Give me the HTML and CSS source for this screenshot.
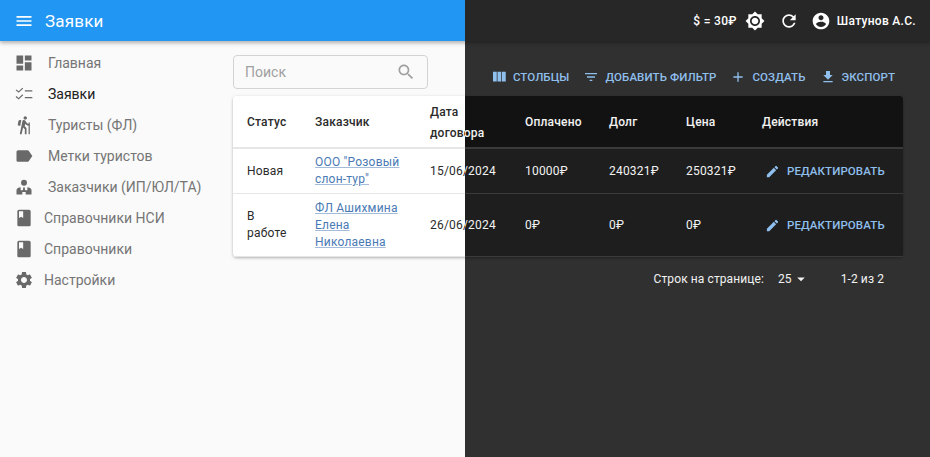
FILE: index.html
```html
<!DOCTYPE html>
<html lang="ru">
<head>
    <meta charset="UTF-8">
    <title>Заявки</title>
    <link rel="stylesheet" href="styles.css">
</head>
<body>
    <svg class="sprite" xmlns="http://www.w3.org/2000/svg">
        <symbol id="i-menu" viewBox="0 0 24 24"><path d="M3 18h18v-2H3v2zm0-5h18v-2H3v2zm0-7v2h18V6H3z"/></symbol>
        <symbol id="i-dashboard" viewBox="0 0 24 24"><path d="M3 13h8V3H3v10zm0 8h8v-6H3v6zm10 0h8V11h-8v10zm0-18v6h8V3h-8z"/></symbol>
        <symbol id="i-checklist" viewBox="0 0 24 24"><path d="M22 7.5h-9V9h9V7.5zm0 8h-9V17h9v-1.500zM5.540 10.500 2 7.460l1-1 2.540 2.200 4.500-4.300 1 1-5.500 5.140zm0 8L2 15.460l1-1 2.540 2.200 4.500-4.300 1 1-5.500 5.140z"/></symbol>
        <symbol id="i-hiking" viewBox="0 0 24 24"><path d="M13.5 5.5c1.1 0 2-.9 2-2s-.9-2-2-2-2 .9-2 2 .9 2 2 2zM17.5 10.78c-1.23-.37-2.22-1.17-2.8-2.18l-1-1.6c-.41-.65-1.11-1-1.84-1-.78 0-1.59.5-1.78 1.44S7 23 7 23h2.1l1.8-8 2.1 2v6h2v-7.5l-2.1-2 .6-3c1 1.15 2.41 2.01 4 2.34V23H19V9h-1.5v1.78zM7.43 13.13l-2.12-.41c-.54-.11-.9-.63-.79-1.17l.76-3.93c.21-1.08 1.26-1.79 2.34-1.58l1.16.23-1.35 6.86z"/></symbol>
        <symbol id="i-label" viewBox="0 0 24 24"><path d="M17.63 5.84C17.27 5.33 16.67 5 16 5L5 5.01C3.9 5.01 3 5.9 3 7v10c0 1.1.9 1.99 2 1.99L16 19c.67 0 1.27-.33 1.63-.84L22 12l-4.37-6.16z"/></symbol>
        <symbol id="i-customer" viewBox="0 0 24 24"><circle cx="12" cy="7" r="3.6"/><path d="M3 21v-5c0-2 1.6-3.2 3.500-3.500L8 12.300V16h2.600l.7-3.800h1.400l.7 3.800H16v-3.700l1.500.2c1.900.3 3.500 1.500 3.500 3.500v5h-7v-3h-4v3H3z"/></symbol>
        <symbol id="i-book" viewBox="0 0 24 24"><path d="M18 2H6c-1.1 0-2 .9-2 2v16c0 1.1.9 2 2 2h12c1.1 0 2-.9 2-2V4c0-1.1-.9-2-2-2zM6 4h5v8l-2.5-1.5L6 12V4z"/></symbol>
        <symbol id="i-settings" viewBox="0 0 24 24"><path d="M19.14 12.94c.04-.3.06-.61.06-.94 0-.32-.02-.64-.07-.94l2.03-1.58c.18-.14.23-.41.12-.61l-1.92-3.32c-.12-.22-.37-.29-.59-.22l-2.39.96c-.5-.38-1.03-.7-1.62-.94l-.36-2.54c-.04-.24-.24-.41-.48-.41h-3.84c-.24 0-.43.17-.47.41l-.36 2.54c-.59.24-1.13.57-1.62.94l-2.39-.96c-.22-.08-.47 0-.59.22L2.74 8.87c-.12.21-.08.47.12.61l2.03 1.58c-.05.3-.09.63-.09.94s.02.64.07.94l-2.03 1.58c-.18.14-.23.41-.12.61l1.92 3.32c.12.22.37.29.59.22l2.39-.96c.5.38 1.03.7 1.62.94l.36 2.54c.05.24.24.41.48.41h3.84c.24 0 .44-.17.47-.41l.36-2.54c.59-.24 1.13-.56 1.62-.94l2.39.96c.22.08.47 0 .59-.22l1.92-3.32c.12-.22.07-.47-.12-.61l-2.01-1.58zM12 15.6c-1.98 0-3.6-1.62-3.6-3.6s1.62-3.6 3.6-3.6 3.6 1.62 3.6 3.6-1.62 3.6-3.6 3.6z"/></symbol>
        <symbol id="i-search" viewBox="0 0 24 24"><path d="M15.5 14h-.79l-.28-.27C15.41 12.59 16 11.11 16 9.5 16 5.91 13.09 3 9.5 3S3 5.91 3 9.5 5.91 16 9.5 16c1.61 0 3.09-.59 4.23-1.57l.27.28v.79l5 4.99L20.49 19l-4.99-5zm-6 0C7.01 14 5 11.99 5 9.5S7.01 5 9.5 5 14 7.01 14 9.5 11.99 14 9.5 14z"/></symbol>
        <symbol id="i-brightness" viewBox="0 0 24 24"><path d="M20 8.69V4h-4.69L12 .69 8.69 4H4v4.69L.69 12 4 15.31V20h4.69L12 23.31 15.31 20H20v-4.69L23.31 12 20 8.69zM12 18c-3.31 0-6-2.69-6-6s2.69-6 6-6 6 2.69 6 6-2.69 6-6 6zm0-10c-2.21 0-4 1.79-4 4s1.79 4 4 4 4-1.79 4-4-1.79-4-4-4z"/></symbol>
        <symbol id="i-refresh" viewBox="0 0 24 24"><path d="M17.65 6.35C16.2 4.9 14.21 4 12 4c-4.42 0-7.99 3.58-7.99 8s3.57 8 7.99 8c3.73 0 6.84-2.55 7.73-6h-2.08c-.82 2.33-3.04 4-5.65 4-3.31 0-6-2.69-6-6s2.69-6 6-6c1.66 0 3.14.69 4.22 1.78L13 11h7V4l-2.35 2.35z"/></symbol>
        <symbol id="i-account" viewBox="0 0 24 24"><path d="M12 2C6.48 2 2 6.48 2 12s4.48 10 10 10 10-4.48 10-10S17.52 2 12 2zm0 3c1.66 0 3 1.34 3 3s-1.34 3-3 3-3-1.34-3-3 1.34-3 3-3zm0 14.2c-2.5 0-4.71-1.28-6-3.22.03-1.99 4-3.08 6-3.08 1.99 0 5.97 1.09 6 3.08-1.29 1.94-3.5 3.22-6 3.22z"/></symbol>
        <symbol id="i-columns" viewBox="0 0 24 24"><path d="M10 18h5V5h-5v13zm-6 0h5V5H4v13zM16 5v13h5V5h-5z"/></symbol>
        <symbol id="i-filter" viewBox="0 0 24 24"><path d="M10 18h4v-2h-4v2zM3 6v2h18V6H3zm3 7h12v-2H6v2z"/></symbol>
        <symbol id="i-add" viewBox="0 0 24 24"><path d="M19 13h-6v6h-2v-6H5v-2h6V5h2v6h6v2z"/></symbol>
        <symbol id="i-export" viewBox="0 0 24 24"><path d="M19 9h-4V3H9v6H5l7 7 7-7zM5 18v2h14v-2H5z"/></symbol>
        <symbol id="i-edit" viewBox="0 0 24 24"><path d="M3 17.25V21h3.75L17.81 9.94l-3.75-3.75L3 17.25zM20.71 7.04c.39-.39.39-1.02 0-1.41l-2.34-2.34a.9959.9959 0 0 0-1.41 0l-1.83 1.83 3.75 3.75 1.83-1.83z"/></symbol>
        <symbol id="i-drop" viewBox="0 0 24 24"><path d="M7 10l5 5 5-5z"/></symbol>
    </svg>

    <div class="app theme-dark" id="app">
        <header class="appbar">
            <svg class="icon appbar-menu"><use href="#i-menu"/></svg>
            <h1 class="appbar-title">Заявки</h1>
            <div class="appbar-right">
                <span class="rate">$ = 30₽</span>
                <svg class="icon icon-brightness"><use href="#i-brightness"/></svg>
                <svg class="icon icon-refresh"><use href="#i-refresh"/></svg>
                <svg class="icon icon-account"><use href="#i-account"/></svg>
                <span class="username">Шатунов А.С.</span>
            </div>
        </header>

        <div class="layout">
            <nav class="sidebar">
                <a class="nav-item"><svg class="icon"><use href="#i-dashboard"/></svg><span>Главная</span></a>
                <a class="nav-item active"><svg class="icon"><use href="#i-checklist"/></svg><span>Заявки</span></a>
                <a class="nav-item"><svg class="icon"><use href="#i-hiking"/></svg><span>Туристы (ФЛ)</span></a>
                <a class="nav-item"><svg class="icon"><use href="#i-label"/></svg><span>Метки туристов</span></a>
                <a class="nav-item"><svg class="icon"><use href="#i-customer"/></svg><span>Заказчики (ИП/ЮЛ/ТА)</span></a>
                <a class="nav-item short"><svg class="icon"><use href="#i-book"/></svg><span>Справочники НСИ</span></a>
                <a class="nav-item short"><svg class="icon"><use href="#i-book"/></svg><span>Справочники</span></a>
                <a class="nav-item short"><svg class="icon"><use href="#i-settings"/></svg><span>Настройки</span></a>
            </nav>

            <main class="content">
                <div class="topline">
                    <div class="search">
                        <span class="search-text">Поиск</span>
                        <svg class="icon"><use href="#i-search"/></svg>
                    </div>
                    <div class="toolbar">
                        <a class="tool"><svg class="icon icon-columns"><use href="#i-columns"/></svg>Столбцы</a>
                        <a class="tool"><svg class="icon"><use href="#i-filter"/></svg>Добавить фильтр</a>
                        <a class="tool"><svg class="icon"><use href="#i-add"/></svg>Создать</a>
                        <a class="tool"><svg class="icon"><use href="#i-export"/></svg>Экспорт</a>
                    </div>
                </div>

                <table class="grid">
                    <thead>
                        <tr>
                            <th>Статус</th>
                            <th>Заказчик</th>
                            <th>Дата договора</th>
                            <th>Оплачено</th>
                            <th>Долг</th>
                            <th>Цена</th>
                            <th>Действия</th>
                        </tr>
                    </thead>
                    <tbody>
                        <tr class="row-one">
                            <td>Новая</td>
                            <td><a class="link">ООО "Розовый слон-тур"</a></td>
                            <td>15/06/2024</td>
                            <td>10000₽</td>
                            <td>240321₽</td>
                            <td>250321₽</td>
                            <td><a class="edit"><svg class="icon"><use href="#i-edit"/></svg>Редактировать</a></td>
                        </tr>
                        <tr class="row-two">
                            <td>В работе</td>
                            <td><a class="link">ФЛ Ашихмина Елена Николаевна</a></td>
                            <td>26/06/2024</td>
                            <td>0₽</td>
                            <td>0₽</td>
                            <td>0₽</td>
                            <td><a class="edit"><svg class="icon"><use href="#i-edit"/></svg>Редактировать</a></td>
                        </tr>
                    </tbody>
                </table>

                <div class="pager">
                    <span>Строк на странице:</span>
                    <span class="pager-size">25<svg class="icon"><use href="#i-drop"/></svg></span>
                    <span>1-2 из 2</span>
                </div>
            </main>
        </div>
    </div>

    <!-- left half: the same page in the light theme -->
    <div class="split" id="split"></div>

    <script src="app.js"></script>
</body>
</html>
```

FILE: styles.css
```css
html, body {
    margin: 0;
    height: 100%;
    overflow: hidden;
}

body {
    font-family: Roboto, "Noto Sans", sans-serif;
    position: relative;
}

.sprite {
    display: none;
}

.icon {
    width: 24px;
    height: 24px;
    fill: currentColor;
    flex: none;
    display: block;
}

/* Theme colours */
.theme-dark {
    --bg: #303030;
    --bar-bg: #272727;
    --bar-text: #fff;
    --text: #f2f2f2;
    --nav: #fff;
    --nav-active: #fff;
    --nav-icon: #fff;
    --card: #1e1e1e;
    --head: #121212;
    --line: #3a3a3a;
    --link: #90caf9;
    --accent: #8fbfec;
    --muted: #aaa;
}

.theme-light {
    --bg: #fafafa;
    --bar-bg: #2196f3;
    --bar-text: #fff;
    --text: #2b2b2b;
    --nav: #757575;
    --nav-active: #212121;
    --nav-icon: #696969;
    --card: #fff;
    --head: #fff;
    --line: #e6e6e6;
    --link: #4a7ab5;
    --accent: #1976d2;
    --muted: #a0a0a0;
}

.app {
    width: 930px;
    height: 457px;
    display: flex;
    flex-direction: column;
    background-color: var(--bg);
    color: var(--text);
}

.split {
    position: absolute;
    top: 0;
    left: 0;
    width: 465px;
    height: 457px;
    overflow: hidden;
}

/* Top bar */
.appbar {
    height: 41px;
    flex: none;
    display: flex;
    align-items: center;
    padding: 0 14px;
    background-color: var(--bar-bg);
    color: var(--bar-text);
    box-shadow: 0 2px 4px rgba(0, 0, 0, 0.3);
    position: relative;
}

.appbar-menu {
    width: 20px;
    height: 20px;
}

.appbar-title {
    margin: 0 0 0 11px;
    font-size: 17px;
    font-weight: 400;
    letter-spacing: 0.2px;
}

.appbar-right {
    margin-left: auto;
    display: flex;
    align-items: center;
    font-size: 12px;
    font-weight: 500;
    letter-spacing: 0.3px;
}

.icon-brightness {
    width: 20px;
    height: 20px;
    margin-left: 8px;
}

.icon-refresh {
    width: 20px;
    height: 20px;
    margin-left: 14px;
}

.icon-account {
    width: 20px;
    height: 20px;
    margin-left: 12px;
    margin-right: 6px;
}

/* Layout */
.layout {
    flex: 1;
    display: flex;
    min-height: 0;
}

.sidebar {
    width: 233px;
    flex: none;
    box-sizing: border-box;
    padding: 6px 0 0 14px;
    color: var(--nav);
    font-size: 14px;
}

.nav-item {
    height: 31px;
    display: flex;
    align-items: center;
    gap: 14px;
}

.nav-item .icon {
    width: 20px;
    height: 20px;
    color: var(--nav-icon);
}

.nav-item.short {
    gap: 10px;
}

.nav-item.active {
    color: var(--nav-active);
}

.content {
    flex: 1;
    padding: 14px 27px 0 0;
    min-width: 0;
}

.topline {
    display: flex;
    justify-content: space-between;
    align-items: flex-end;
    height: 41px;
}

.search {
    width: 195px;
    height: 34px;
    box-sizing: border-box;
    align-self: flex-start;
    display: flex;
    align-items: center;
    justify-content: space-between;
    padding: 0 11px;
    border: 1px solid #d3d3d3;
    border-radius: 4px;
    color: var(--muted);
    font-size: 14px;
}

.search .icon {
    width: 20px;
    height: 20px;
}

.toolbar {
    display: flex;
    align-items: center;
    height: 30px;
    margin-bottom: 4px;
    margin-right: 8px;
    gap: 14px;
}

.tool {
    display: flex;
    align-items: center;
    gap: 6px;
    color: var(--accent);
    font-size: 11.5px;
    font-weight: 500;
    letter-spacing: 0.1px;
    text-transform: uppercase;
}

.tool .icon {
    width: 16px;
    height: 16px;
}

.tool .icon-columns {
    width: 18px;
    height: 18px;
    margin: 0 -1px;
}

/* Table */
.grid {
    width: 670px;
    table-layout: fixed;
    border-collapse: separate;
    border-spacing: 0;
    background-color: var(--card);
    border-radius: 4px;
    box-shadow: 0 1px 3px rgba(0, 0, 0, 0.3);
    font-size: 12px;
    letter-spacing: 0.2px;
}

.grid th,
.grid td {
    padding: 0 14px;
    text-align: left;
    box-sizing: border-box;
    border-bottom: 1px solid var(--line);
}

.grid th {
    height: 53px;
    padding-top: 2px;
    line-height: 21px;
    font-weight: 500;
    background-color: var(--head);
    border-bottom-width: 2px;
}

.grid th:first-child {
    border-top-left-radius: 4px;
}

.grid th:last-child {
    border-top-right-radius: 4px;
}

.grid td {
    line-height: 17px;
}

.grid td:nth-child(2) {
    padding-right: 10px;
}

.grid th:nth-child(1) { width: 68px; }
.grid th:nth-child(2) { width: 115px; }
.grid th:nth-child(3) { width: 95px; }
.grid th:nth-child(4) { width: 84px; }
.grid th:nth-child(5) { width: 77px; }
.grid th:nth-child(6) { width: 76px; }

.row-one td {
    height: 45px;
}

.row-two td {
    height: 63px;
}

.link {
    color: var(--link);
    text-decoration: underline;
    text-decoration-color: rgba(74, 122, 181, 0.5);
}

.edit {
    display: flex;
    align-items: center;
    gap: 7px;
    margin-left: 3px;
    color: var(--accent);
    font-size: 11.5px;
    font-weight: 500;
    letter-spacing: 0.1px;
    text-transform: uppercase;
}

.edit .icon {
    width: 15px;
    height: 15px;
}

/* Pagination */
.pager {
    width: 670px;
    height: 43px;
    box-sizing: border-box;
    display: flex;
    justify-content: flex-end;
    align-items: center;
    padding-right: 19px;
    font-size: 12px;
    letter-spacing: 0.1px;
}

.pager-size {
    display: flex;
    align-items: center;
    margin: 0 31px 0 14px;
}

.pager-size .icon {
    width: 18px;
    height: 18px;
}
```

FILE: app.js
```js
// Build the light half from the dark page so both stay identical
const copy = document.getElementById('app').cloneNode(true);
copy.removeAttribute('id');
copy.classList.replace('theme-dark', 'theme-light');
document.getElementById('split').appendChild(copy);
```
